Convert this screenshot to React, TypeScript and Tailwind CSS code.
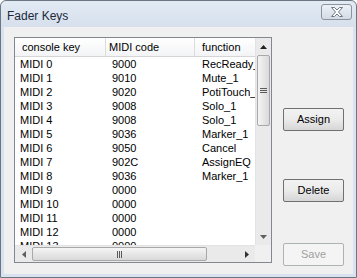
import React from 'react';

const rows = [
  ['MIDI 0', '9000', 'RecReady_1'],
  ['MIDI 1', '9010', 'Mute_1'],
  ['MIDI 2', '9020', 'PotiTouch_1'],
  ['MIDI 3', '9008', 'Solo_1'],
  ['MIDI 4', '9008', 'Solo_1'],
  ['MIDI 5', '9036', 'Marker_1'],
  ['MIDI 6', '9050', 'Cancel'],
  ['MIDI 7', '902C', 'AssignEQ'],
  ['MIDI 8', '9036', 'Marker_1'],
  ['MIDI 9', '0000', ''],
  ['MIDI 10', '0000', ''],
  ['MIDI 11', '0000', ''],
  ['MIDI 12', '0000', ''],
  ['MIDI 13', '0000', ''],
];

function DlgButton({ label, disabled, className }: { label: string; disabled?: boolean; className?: string }) {
  return (
    <button
      className={`w-[61px] h-[23px] rounded-[2px] border text-[11px] leading-none ${
        disabled
          ? 'border-[#adb2b5] bg-[#f4f4f4] text-[#a0a0a0]'
          : 'border-[#707070] bg-gradient-to-b from-[#f2f2f2] via-[#ebebeb] to-[#d6d6d6] text-black'
      } ${className ?? ''}`}
    >
      {label}
    </button>
  );
}

export default function App() {
  return (
    <div className="w-[357px] h-[278px] bg-white font-['Liberation_Sans',Arial,sans-serif]">
      <div className="w-full h-full flex flex-col rounded-t-[6px] border border-[#6c7683] bg-[#d9e3ef]">
        {/* title bar */}
        <div className="h-[26px] flex items-start justify-between pl-[6px] pr-[4px] bg-gradient-to-b from-[#e2eaf4] to-[#d6e0ec] rounded-t-[6px]">
          <span className="text-[12px] text-[#1c2a3a] mt-[6px]">Fader Keys</span>
          <div className="mt-[3px] w-[31px] h-[16px] rounded-[3px] border border-[#8a939e] bg-gradient-to-b from-[#eef2f7] to-[#d3dbe5] flex items-center justify-center">
            <svg width="14" height="10" viewBox="0 0 14 10">
              <path
                d="M1.5 0.5 H4.5 L7 3 L9.5 0.5 H12.5 L8.5 5 L12.5 9.5 H9.5 L7 7 L4.5 9.5 H1.5 L5.5 5 Z"
                fill="#fafcfe"
                stroke="#6f7986"
                strokeWidth="1"
                strokeLinejoin="round"
              />
            </svg>
          </div>
        </div>

        {/* client area */}
        <div className="flex-1 mx-[3px] mb-[3px] bg-[#f0f0f0] flex pl-[10px] pt-[10px]">
          {/* list view */}
          <div className="w-[258px] h-[226px] border border-[#828790] bg-white flex flex-col text-[11px] text-black">
            <div className="flex h-[207px]">
              <div className="w-[240px] flex flex-col overflow-hidden">
                <div className="h-[19px] flex border-b border-[#d5d5d5] bg-gradient-to-b from-white to-[#f3f4f6] shrink-0">
                  <div className="w-[91px] shrink-0 border-r border-[#dcdcdc] pl-[7px] flex items-center">console key</div>
                  <div className="w-[89px] shrink-0 border-r border-[#dcdcdc] pl-[3px] flex items-center">MIDI code</div>
                  <div className="w-[60px] shrink-0 pl-[7px] flex items-center">function</div>
                </div>
                {rows.map((r) => (
                  <div key={r[0]} className="h-[14px] flex leading-[14px] whitespace-nowrap shrink-0">
                    <div className="w-[91px] shrink-0 pl-[5px]">{r[0]}</div>
                    <div className="w-[89px] shrink-0 pl-[6px]">{r[1]}</div>
                    <div className="w-[60px] shrink-0 pl-[7px] overflow-hidden">{r[2]}</div>
                  </div>
                ))}
              </div>
              {/* vertical scrollbar */}
              <div className="w-[16px] flex flex-col bg-[#eaeaea] border-l border-[#e3e3e3]">
                <div className="h-[17px] flex items-center justify-center">
                  <svg width="7" height="4" viewBox="0 0 7 4"><path d="M0 4 L3.5 0 L7 4 Z" fill="#222" /></svg>
                </div>
                <div className="h-[71px] mx-[1px] rounded-[2px] border border-[#a8a8a8] bg-gradient-to-r from-[#f5f5f5] to-[#d9d9d9] flex items-center justify-center">
                  <svg width="7" height="6" viewBox="0 0 7 6">
                    <path d="M0 0.5 H7 M0 2.5 H7 M0 4.5 H7" stroke="#5a5a5a" strokeWidth="1" />
                  </svg>
                </div>
                <div className="flex-1" />
                <div className="h-[17px] flex items-center justify-center">
                  <svg width="7" height="4" viewBox="0 0 7 4"><path d="M0 0 L3.5 4 L7 0 Z" fill="#606060" /></svg>
                </div>
              </div>
            </div>
            {/* horizontal scrollbar */}
            <div className="flex flex-1">
              <div className="w-[240px] flex bg-[#eaeaea] border-t border-[#e3e3e3]">
                <div className="w-[17px] flex items-center justify-center">
                  <svg width="4" height="7" viewBox="0 0 4 7"><path d="M4 0 L0 3.5 L4 7 Z" fill="#606060" /></svg>
                </div>
                <div className="w-[175px] my-[1px] rounded-[2px] border border-[#a8a8a8] bg-gradient-to-b from-[#f5f5f5] to-[#d9d9d9] flex items-center justify-center">
                  <svg width="6" height="7" viewBox="0 0 6 7">
                    <path d="M0.5 0 V7 M2.5 0 V7 M4.5 0 V7" stroke="#5a5a5a" strokeWidth="1" />
                  </svg>
                </div>
                <div className="flex-1" />
                <div className="w-[17px] flex items-center justify-center">
                  <svg width="4" height="7" viewBox="0 0 4 7"><path d="M0 0 L4 3.5 L0 7 Z" fill="#333" /></svg>
                </div>
              </div>
              <div className="flex-1 bg-[#f0f0f0]" />
            </div>
          </div>

          {/* buttons */}
          <div className="flex flex-col ml-[11px]">
            <DlgButton label="Assign" className="mt-[71px]" />
            <DlgButton label="Delete" className="mt-[48px]" />
            <DlgButton label="Save" disabled className="mt-[41px]" />
          </div>
        </div>
      </div>
    </div>
  );
}
